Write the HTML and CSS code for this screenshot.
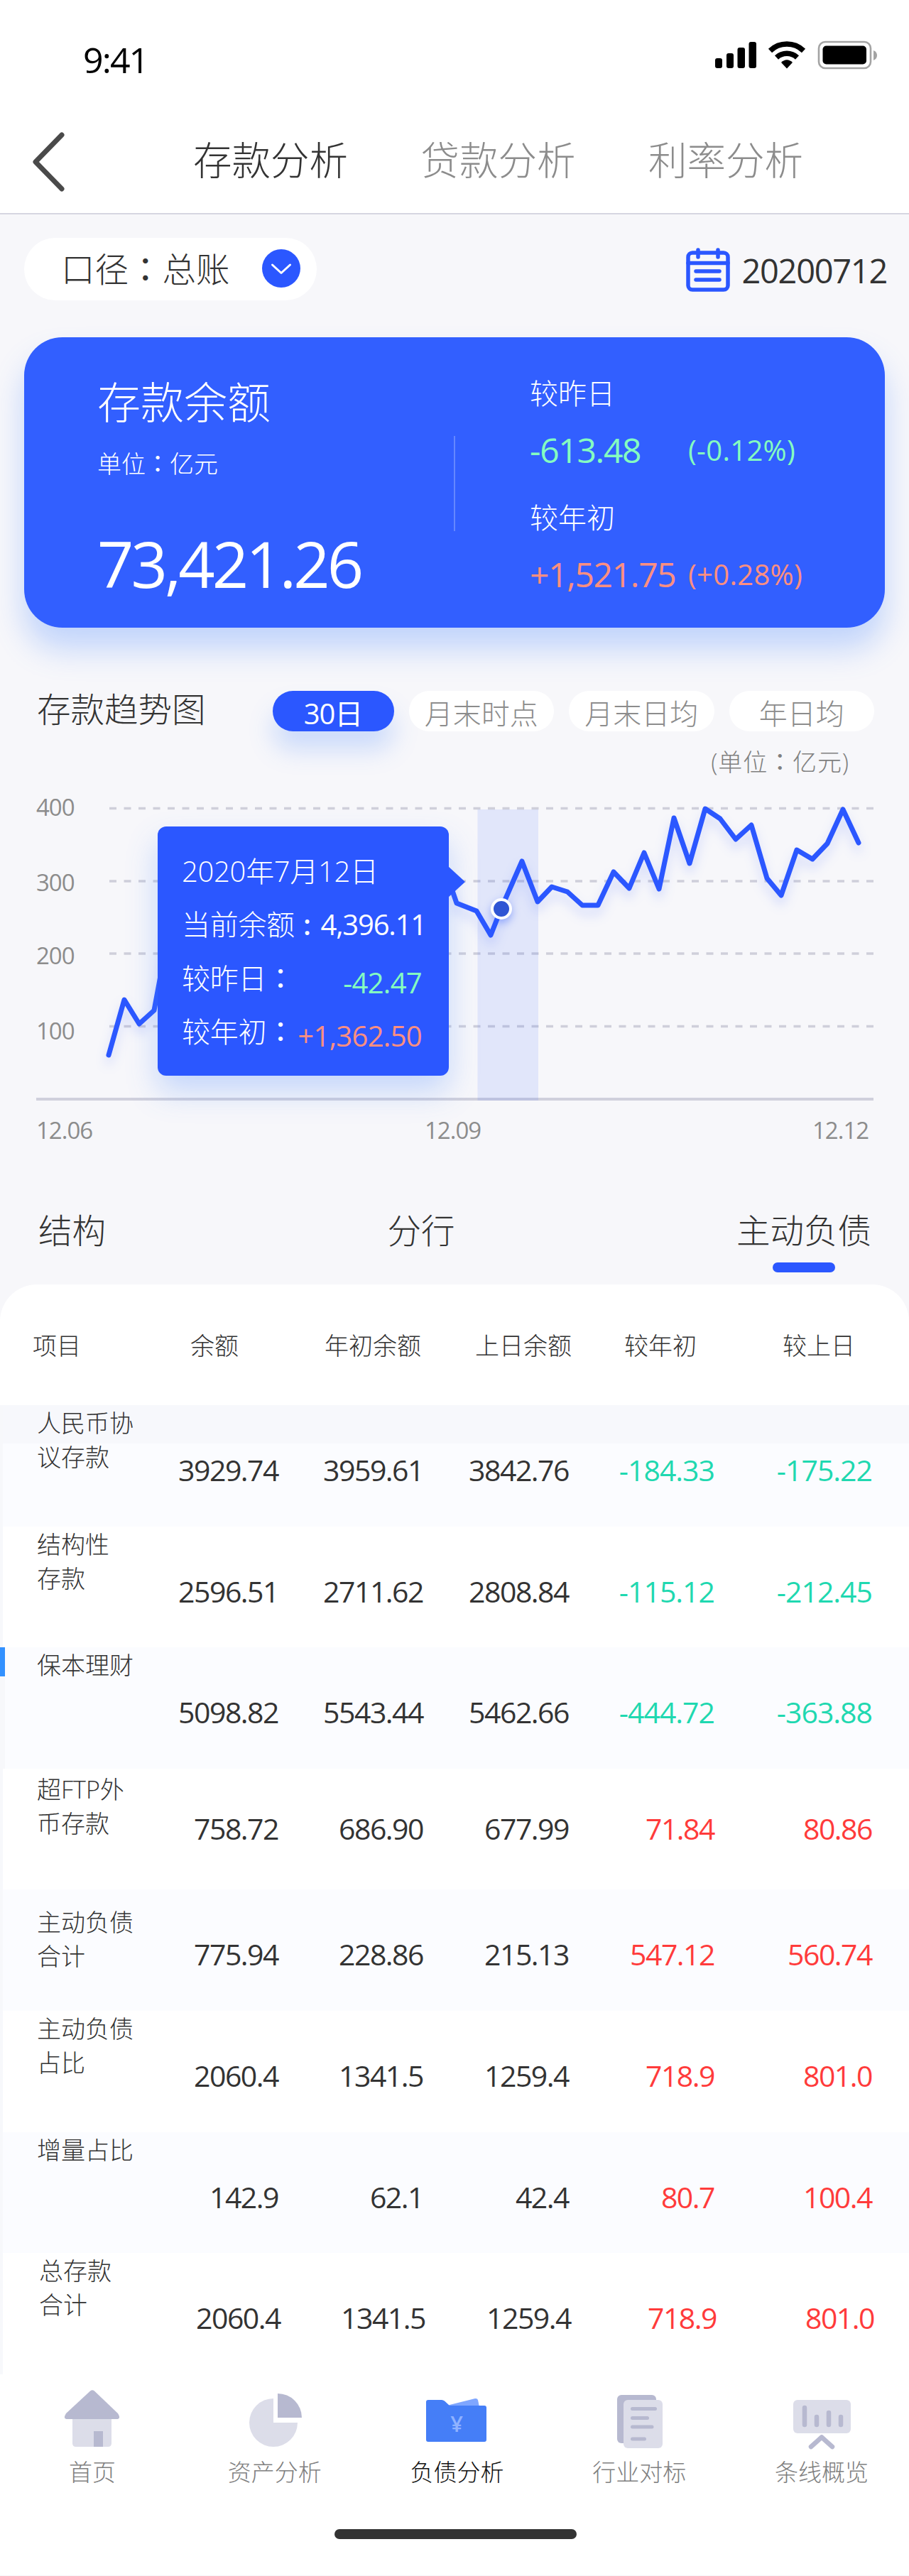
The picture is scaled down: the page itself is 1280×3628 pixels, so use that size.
FILE: index.html
```html
<!DOCTYPE html>
<html lang="zh-CN">
<head>
    <meta charset="UTF-8">
    <meta name="viewport" content="width=device-width, initial-scale=1.0">
    <title>存款分析</title>
    <link rel="stylesheet" href="styles.css">
</head>
<body>
    <header class="header">
        <div class="status-bar">
            <span class="time">9:41</span>
            <svg class="status-icons" width="232" height="44" viewBox="1006 56 232 44">
                <rect x="1007" y="83" width="10" height="14" rx="3"/>
                <rect x="1023" y="76" width="10" height="21" rx="3"/>
                <rect x="1038.500" y="68" width="10.500" height="29" rx="3"/>
                <rect x="1054.500" y="60" width="10.500" height="37" rx="3"/>
                <g fill="none" stroke="#000" stroke-width="7.500">
                    <path d="M1084.500 72.500 A34 34 0 0 1 1131.500 72.500"/>
                    <path d="M1093.500 82 A21.500 21.500 0 0 1 1122.500 82"/>
                </g>
                <path d="M1100 89 Q1108 81.500 1116 89 L1108 97.500 Z"/>
                <rect x="1153" y="60" width="73" height="37" rx="9" fill="none" stroke="#a3a3a3" stroke-width="2.600"/>
                <rect x="1158.500" y="65.500" width="61.500" height="26" rx="5"/>
                <path d="M1230 72 Q1235 74 1235 79 Q1235 84 1230 86 Z" fill="#a3a3a3"/>
            </svg>
        </div>
        <nav class="top-nav">
            <svg class="back" width="50" height="86" viewBox="0 0 50 86">
                <path d="M43 5 L6 43 L43 81"/>
            </svg>
            <span class="top-tab active">存款分析</span>
            <span class="top-tab">贷款分析</span>
            <span class="top-tab">利率分析</span>
        </nav>
    </header>

    <div class="filter-bar">
        <div class="scope">
            <span>口径<i class="colon" lang="zh-TW">：</i>总账</span>
            <svg width="54" height="54" viewBox="0 0 54 54">
                <circle cx="27" cy="27" r="27" fill="#2b57ff"/>
                <path d="M14.500 22 L27 33.500 L39.500 22" fill="none" stroke="#fff" stroke-width="3" stroke-linecap="round" stroke-linejoin="round"/>
            </svg>
        </div>
        <div class="date">
            <svg width="62" height="62" viewBox="0 0 62 62" fill="none" stroke="#2b57ff" stroke-width="5.500" stroke-linecap="round">
                <rect x="3" y="7" width="56" height="52" rx="6"/>
                <path d="M3 21.500 H59"/>
                <path d="M17 3 V13 M45 3 V13"/>
                <path d="M14 33 H47 M14 45 H47"/>
            </svg>
            <span>20200712</span>
        </div>
    </div>

    <section class="balance-card">
        <div class="balance-main">
            <div class="balance-title">存款余额</div>
            <div class="balance-unit">单位<i class="colon" lang="zh-TW">：</i>亿元</div>
            <div class="balance-value">73,421.26</div>
        </div>
        <div class="balance-divider"></div>
        <div class="balance-compare">
            <div class="compare-label">较昨日</div>
            <div class="compare-row down"><span class="amount">-613.48</span><span class="percent">(-0.12%)</span></div>
            <div class="compare-label">较年初</div>
            <div class="compare-row up"><span class="amount">+1,521.75</span><span class="percent">(+0.28%)</span></div>
        </div>
    </section>

    <section class="trend">
        <div class="trend-head">
            <h2>存款趋势图</h2>
            <div class="periods">
                <span class="period active">30日</span>
                <span class="period">月末时点</span>
                <span class="period">月末日均</span>
                <span class="period">年日均</span>
            </div>
        </div>
        <div class="trend-unit">(单位<i class="colon" lang="zh-TW">：</i>亿元)</div>

        <div class="chart">
            <svg class="chart-plot" width="1280" height="530" viewBox="0 1100 1280 530">
                <g class="grid">
                    <path d="M154 1138.500 H1230"/>
                    <path d="M154 1241 H1230"/>
                    <path d="M154 1343 H1230"/>
                    <path d="M154 1445.500 H1230"/>
                </g>
                <path class="axis" d="M51 1548 H1230"/>
                <rect x="672.500" y="1140" width="85.500" height="410" fill="#2b57ff" fill-opacity="0.1"/>
                <polyline class="line" points="153,1486 175,1408 196,1442 217,1423 238,1310 632,1240 643,1272 671,1283 691,1317 706,1279 735,1213 757,1270 777,1249 799,1256 820,1275 842,1275 864,1228 886,1251 907,1201 928,1252 949,1152 971,1216 993,1139 1014,1153 1036,1182 1058,1162 1080,1237 1100,1261 1122,1197 1144,1210 1165,1188 1187,1140 1209,1187"/>
                <circle class="point" cx="706" cy="1280" r="13"/>
                <g class="labels">
                    <text x="51" y="1149">400</text>
                    <text x="51" y="1255">300</text>
                    <text x="51" y="1358">200</text>
                    <text x="51" y="1464">100</text>
                    <text x="51" y="1604">12.06</text>
                    <text x="598" y="1604">12.09</text>
                    <text x="1144" y="1604">12.12</text>
                </g>
            </svg>
            <div class="tooltip">
                <div class="tip-row">2020年7月12日</div>
                <div class="tip-row"><span>当前余额 <b class="tip-colon">:</b></span><span class="tip-value current">4,396.11</span></div>
                <div class="tip-row"><span>较昨日<i class="colon" lang="zh-TW">：</i></span><span class="tip-value down">-42.47</span></div>
                <div class="tip-row"><span>较年初<i class="colon" lang="zh-TW">：</i></span><span class="tip-value up">+1,362.50</span></div>
            </div>
        </div>
    </section>

    <nav class="section-tabs">
        <span>结构</span>
        <span>分行</span>
        <span class="active">主动负债</span>
    </nav>

    <section class="panel">
        <div class="row head">
            <div>项目</div><div>余额</div><div>年初余额</div><div>上日余额</div><div>较年初</div><div>较上日</div>
        </div>
        <div class="row first">
            <div class="name">人民币协<br>议存款</div><div>3929.74</div><div>3959.61</div><div>3842.76</div><div class="down">-184.33</div><div class="down">-175.22</div>
        </div>
        <div class="row">
            <div class="name">结构性<br>存款</div><div>2596.51</div><div>2711.62</div><div>2808.84</div><div class="down">-115.12</div><div class="down">-212.45</div>
        </div>
        <div class="row marked">
            <div class="name">保本理财</div><div>5098.82</div><div>5543.44</div><div>5462.66</div><div class="down">-444.72</div><div class="down">-363.88</div>
        </div>
        <div class="row foreign">
            <div class="name">超FTP外<br>币存款</div><div>758.72</div><div>686.90</div><div>677.99</div><div class="up">71.84</div><div class="up">80.86</div>
        </div>
        <div class="row subtotal">
            <div class="name">主动负债<br>合计</div><div>775.94</div><div>228.86</div><div>215.13</div><div class="up">547.12</div><div class="up">560.74</div>
        </div>
        <div class="row">
            <div class="name">主动负债<br>占比</div><div>2060.4</div><div>1341.5</div><div>1259.4</div><div class="up">718.9</div><div class="up">801.0</div>
        </div>
        <div class="row">
            <div class="name">增量占比</div><div>142.9</div><div>62.1</div><div>42.4</div><div class="up">80.7</div><div class="up">100.4</div>
        </div>
        <div class="row total">
            <div class="name">总存款<br>合计</div><div>2060.4</div><div>1341.5</div><div>1259.4</div><div class="up">718.9</div><div class="up">801.0</div>
        </div>
    </section>

    <footer class="tab-bar">
        <a class="tab-item">
            <svg width="100" height="90" viewBox="80 3364 100 90">
                <path d="M102 3404 H157 V3441 Q157 3446 152 3446 H107 Q102 3446 102 3441 Z" fill="#dcdde9"/>
                <rect x="132" y="3424" width="13" height="22" fill="#b7b9d0"/>
                <path d="M127 3367.500 Q130 3365 133 3367.500 L166 3399 Q171 3407 164 3407 H95 Q88 3407 93 3399 Z" fill="#b7b9d0"/>
            </svg>
            <span>首页</span>
        </a>
        <a class="tab-item">
            <svg width="100" height="90" viewBox="336 3364 100 90">
                <path d="M384 3378 A34 34 0 1 0 418 3412 H384 Z" fill="#dcdde9"/>
                <path d="M390 3371 A34 34 0 0 1 424 3405 H390 Z" fill="#b7b9d0"/>
            </svg>
            <span>资产分析</span>
        </a>
        <a class="tab-item active">
            <svg width="100" height="90" viewBox="593 3364 100 90">
                <path d="M628 3388 L668 3378 Q671 3377.500 672 3380 L674 3390 H628 Z" fill="#7fa6ff"/>
                <path d="M602 3380 H621 Q623 3380 625 3381.500 L632 3388 H681 Q684 3388 684 3391 V3436 Q684 3439 681 3439 H602 Q599 3439 599 3436 V3383 Q599 3380 602 3380 Z" fill="#457ef7"/>
                <text x="642" y="3425" class="yen">¥</text>
            </svg>
            <span>负债分析</span>
        </a>
        <a class="tab-item">
            <svg width="100" height="90" viewBox="850 3364 100 90">
                <rect x="869" y="3373" width="55" height="68" rx="6" fill="#b7b9d0"/>
                <rect x="878" y="3380" width="55" height="68" rx="6" fill="#dcdde9"/>
                <path d="M890.500 3392.500 H922.500 M890.500 3405.500 H911.500 M890.500 3418 H918 M890.500 3435 H907.500" stroke="#b7b9d0" stroke-width="5" stroke-linecap="round"/>
            </svg>
            <span>行业对标</span>
        </a>
        <a class="tab-item">
            <svg width="100" height="90" viewBox="1107 3364 100 90">
                <rect x="1117" y="3380" width="81" height="47" rx="6" fill="#dcdde9"/>
                <g fill="none" stroke="#b7b9d0" stroke-width="6.500" stroke-linecap="round" stroke-linejoin="round">
                    <path d="M1133 3391 V3415 M1150 3404 V3415 M1167 3398 V3415 M1184 3404 V3415"/>
                    <path d="M1142 3446 L1157 3432.500 L1172 3446"/>
                </g>
            </svg>
            <span>条线概览</span>
        </a>
    </footer>
    <div class="home-area">
        <div class="home-indicator"></div>
    </div>
</body>
</html>
```
FILE: styles.css
```css
* {
    box-sizing: border-box;
}

body {
    margin: 0;
    width: 1280px;
    height: 3628px;
    background: #f7f7fa;
    color: #333;
    font-family: "Open Sans", "Noto Sans CJK SC", sans-serif;
    font-weight: 300;
    overflow-x: hidden;
}

.colon {
    font-family: "Noto Sans CJK TC", sans-serif;
    font-style: normal;
    font-weight: 400;
}

.header {
    height: 302px;
    background: #fff;
    border-bottom: 2px solid #d6d6e1;
}

.status-bar {
    display: flex;
    justify-content: space-between;
    height: 150px;
    padding: 55px 42px 0 117px;
}

.time {
    font-size: 50px;
    line-height: 58px;
    font-weight: 400;
    letter-spacing: -1.9px;
    color: #000;
}

.top-nav {
    display: flex;
    align-items: center;
    height: 150px;
    padding-left: 44px;
}

.back {
    margin: 5px 178px 0 0;
    fill: none;
    stroke: #4a4a4a;
    stroke-width: 7;
    stroke-linecap: round;
    stroke-linejoin: round;
}

.top-tab {
    width: 320.5px;
    font-size: 54.5px;
    line-height: 60px;
    color: #8c8c8c;
}

.top-tab.active {
    color: #333;
}

.filter-bar {
    display: flex;
    justify-content: space-between;
    align-items: flex-start;
    height: 173px;
    padding: 33px 31px 0 34px;
}

.scope {
    display: flex;
    align-items: center;
    justify-content: space-between;
    width: 412px;
    height: 88px;
    padding: 0 23px 2px 52px;
    border-radius: 44px;
    background: #fff;
    font-size: 47.5px;
    line-height: 60px;
}

.date {
    display: flex;
    align-items: center;
    gap: 16px;
    margin-top: 11px;
    font-size: 47px;
    line-height: 62px;
    letter-spacing: -1.3px;
    font-weight: 400;
}

.date span {
    padding-top: 4px;
}

.date svg {
    margin-top: 2px;
}

.balance-card {
    display: flex;
    width: 1212px;
    height: 409px;
    margin-left: 34px;
    border-radius: 54px;
    background: #325fff;
    box-shadow: 0 30px 44px rgba(80, 140, 255, 0.32);
    color: #fff;
}

.balance-main {
    width: 605px;
    padding: 52px 0 0 103px;
}

.balance-title {
    font-size: 61px;
    line-height: 80px;
}

.balance-unit {
    font-size: 34px;
    line-height: 50px;
    margin-top: 20px;
}

.balance-value {
    font-size: 90px;
    line-height: 100px;
    margin-top: 65px;
    letter-spacing: -4px;
    font-weight: 400;
}

.balance-divider {
    width: 2px;
    height: 134px;
    margin-top: 139px;
    background: rgba(255, 255, 255, 0.25);
}

.balance-compare {
    padding: 54px 0 0 105px;
}

.compare-label {
    font-size: 40px;
    line-height: 50px;
}

.compare-row {
    display: flex;
    height: 75px;
    margin-bottom: 50px;
    padding-top: 35px;
    align-items: center;
    font-weight: 400;
}

.amount {
    width: 223px;
    font-size: 48px;
    line-height: 60px;
    letter-spacing: -1.3px;
}

.percent {
    font-size: 40px;
    line-height: 60px;
    letter-spacing: 0.3px;
}

.balance-card .down,
.tooltip .down {
    color: #85ffc0;
}

.balance-card .up,
.tooltip .up {
    color: #ff8f80;
}

.trend {
    height: 800px;
    padding-top: 89px;
}

.trend-head {
    display: flex;
    justify-content: space-between;
    padding: 0 49px 0 52px;
}

.trend h2 {
    margin: 0;
    font-size: 47.5px;
    line-height: 52px;
    font-weight: 300;
}

.periods {
    display: flex;
    gap: 21px;
}

.period {
    width: 204.5px;
    height: 57px;
    padding-top: 7px;
    border-radius: 28.5px;
    background: #fff;
    color: #8c8c8c;
    font-size: 40px;
    line-height: 50px;
    text-align: center;
}

.period.active {
    width: 171px;
    background: #2b57ff;
    box-shadow: 0 26px 34px rgba(80, 140, 255, 0.25);
    color: #fff;
    font-weight: 400;
    letter-spacing: -1px;
}

.trend-unit {
    height: 70px;
    padding: 22px 84px 0 0;
    font-size: 34px;
    line-height: 40px;
    letter-spacing: 0.9px;
    text-align: right;
    color: #808080;
}

.chart {
    position: relative;
}

.chart-plot {
    display: block;
}

.grid path {
    stroke: #cfcfda;
    stroke-width: 3.5;
    stroke-dasharray: 10 10.5;
}

.axis {
    stroke: #d0d0dc;
    stroke-width: 4;
}

.line {
    fill: none;
    stroke: #2b57ff;
    stroke-width: 7;
    stroke-linejoin: round;
    stroke-linecap: round;
    filter: drop-shadow(0 10px 8px rgba(43, 87, 255, 0.2));
}

.point {
    fill: #2f55d4;
    stroke: #fff;
    stroke-width: 4;
    filter: drop-shadow(0 5px 6px rgba(43, 87, 255, 0.4));
}

.labels text {
    fill: #8c8c8c;
    font-size: 33px;
    font-weight: 400;
    letter-spacing: -1px;
}

.tooltip {
    position: absolute;
    left: 222px;
    top: 64px;
    width: 410px;
    height: 351px;
    padding: 25px 35px 25px 34px;
    border-radius: 12px;
    background: #2b57ff;
    box-shadow: 0 22px 44px rgba(80, 140, 255, 0.3);
    color: #fff;
    font-size: 40px;
    line-height: 75px;
}

.tooltip::after {
    content: "";
    position: absolute;
    left: 409px;
    top: 56px;
    border-left: 24px solid #2b57ff;
    border-top: 22px solid transparent;
    border-bottom: 22px solid transparent;
}

.tip-row {
    display: flex;
    justify-content: space-between;
    height: 75px;
    letter-spacing: -0.3px;
    white-space: nowrap;
}

.tip-colon {
    margin-left: 2px;
    font-weight: 600;
}

.tip-value {
    margin-right: 3px;
    padding-top: 7px;
    font-weight: 400;
    letter-spacing: -0.7px;
}

.tip-value.current {
    margin-right: -3px;
    padding-top: 0;
    letter-spacing: -1.2px;
}

.section-tabs {
    display: flex;
    justify-content: space-between;
    height: 125px;
    padding: 24px 53px 0 54px;
    font-size: 47.5px;
    line-height: 50px;
}

.section-tabs .active::after {
    content: "";
    display: block;
    width: 88px;
    height: 14px;
    margin: 20px auto 0;
    border-radius: 7px;
    background: #2b57ff;
}

.panel {
    border-radius: 52px 52px 0 0;
    background: #fff;
}

.row {
    display: grid;
    grid-template-columns: 192px 200px 204px 205px 205px 222px;
    height: 170.6px;
    border-left: 4px solid #f7f8fb;
    background: #fff;
    font-size: 41px;
    font-weight: 400;
    line-height: 50px;
    text-align: right;
    letter-spacing: -1.5px;
}

.row > div {
    margin-right: 4px;
    padding-top: 66px;
}

.row:nth-child(even) {
    background: #fbfcff;
}

.row .name {
    padding: 1px 0 0 48px;
    font-size: 34px;
    font-weight: 300;
    line-height: 48px;
    letter-spacing: 0;
    text-align: left;
    white-space: nowrap;
}

.row.head {
    grid-template-columns: 222px 189px 212px 210px 223px 1fr;
    height: 170px;
    padding-left: 46px;
    border: 0;
    background: none;
    font-size: 34px;
    font-weight: 300;
    letter-spacing: 0;
    text-align: left;
}

.row.head > div {
    margin: 0;
    padding-top: 61px;
}

.row.first {
    background: linear-gradient(#f7f8fc 54px, #fbfcff 54px);
}

.row.marked {
    border-image: linear-gradient(#3391ff 41px, #f7f8fb 41px) 1;
    border-left-width: 7px;
    grid-template-columns: 189px 200px 204px 205px 205px 222px;
}

.row.marked .name {
    padding-left: 45px;
}

.row.foreign > div {
    padding-top: 59px;
}

.row.foreign .name {
    padding-top: 5px;
}

.row.subtotal .name {
    padding-top: 22px;
}

.row.total {
    padding-left: 3px;
}

.row .down {
    color: #1fd8b0;
    letter-spacing: -1px;
}

.row .up {
    color: #ff3b3b;
}

.tab-bar {
    display: flex;
    justify-content: space-between;
    height: 218px;
    padding: 20px 43px 0 50px;
    background: #fff;
}

.tab-item {
    display: flex;
    flex-direction: column;
    align-items: center;
    width: 160px;
    font-size: 33px;
    line-height: 40px;
    color: #808080;
}

.tab-item span {
    margin-top: 8px;
}

.tab-item.active {
    color: #111;
}

.yen {
    fill: #8fb2ff;
    font-size: 31px;
    font-weight: 600;
    text-anchor: middle;
}

.home-area {
    height: 65px;
    background: #fff;
}

.home-indicator {
    width: 341px;
    height: 14px;
    margin-left: 471px;
    border-radius: 7px;
    background: #333;
}
```
